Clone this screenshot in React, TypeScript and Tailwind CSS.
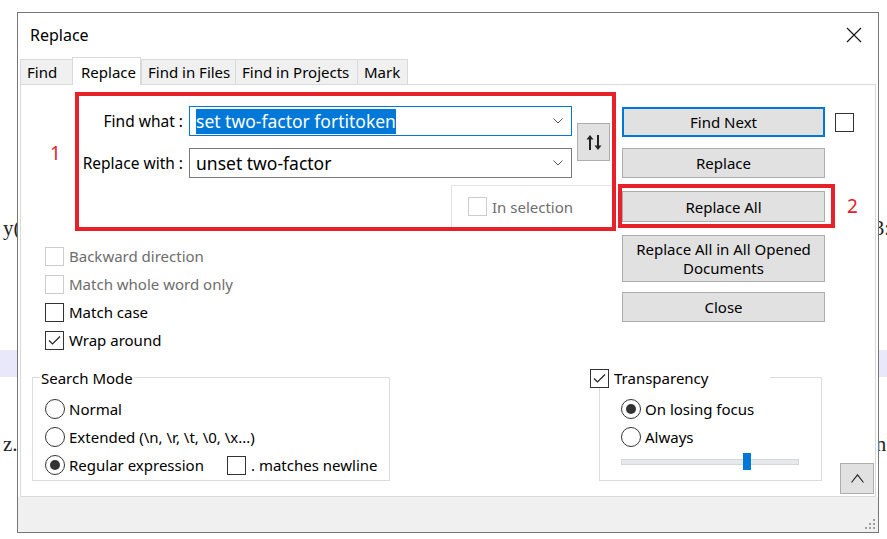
import React from 'react';

type CheckProps = { checked?: boolean; disabled?: boolean };

function CheckBox({ checked, disabled }: CheckProps) {
  return (
    <span
      className={`flex h-[19px] w-[19px] shrink-0 items-center justify-center border bg-white ${
        disabled ? 'border-[#cccccc]' : 'border-[#333333]'
      }`}
    >
      {checked && (
        <svg width="15" height="15" viewBox="0 0 15 15" fill="none">
          <path d="M2 7.5 L5.5 11 L13 3.5" stroke="#222" strokeWidth="1.2" />
        </svg>
      )}
    </span>
  );
}

function Radio({ selected }: { selected?: boolean }) {
  return (
    <span className="flex h-[20px] w-[20px] shrink-0 items-center justify-center rounded-full border border-[#333333] bg-white">
      {selected && <span className="h-[10px] w-[10px] rounded-full bg-[#333333]" />}
    </span>
  );
}

function CheckRow({ label, checked, disabled }: CheckProps & { label: string }) {
  return (
    <div className="flex h-[28px] items-center gap-[5px]">
      <CheckBox checked={checked} disabled={disabled} />
      <span className={disabled ? 'text-[#6d6d6d]' : 'text-black'}>{label}</span>
    </div>
  );
}

function RadioRow({ label, selected }: { label: string; selected?: boolean }) {
  return (
    <div className="flex h-[28px] items-center gap-[4px]">
      <Radio selected={selected} />
      <span>{label}</span>
    </div>
  );
}

function Combo({ value, focused }: { value: string; focused?: boolean }) {
  return (
    <div
      className={`flex h-[30px] w-[383px] items-center border bg-white pl-[6px] pr-[8px] ${
        focused ? 'border-[#0078d7]' : 'border-[#7a7a7a]'
      }`}
    >
      <span className="flex-1 text-[17.5px] leading-[25px]">
        {focused ? <span className="inline-block bg-[#0078d7] text-white">{value}</span> : value}
      </span>
      <svg width="10" height="6" viewBox="0 0 10 6" fill="none">
        <path d="M0.5 0.5 L5 5 L9.5 0.5" stroke="#555" strokeWidth="1" />
      </svg>
    </div>
  );
}

function WinButton({ children, className = '' }: { children: React.ReactNode; className?: string }) {
  return (
    <div
      className={`flex w-[203px] items-center justify-center bg-[#e1e1e1] text-center ${className}`}
    >
      {children}
    </div>
  );
}

const tabs = [
  { label: 'Find', width: 'w-[52px]' },
  { label: 'Replace', width: 'w-[69px]', active: true },
  { label: 'Find in Files', width: 'w-[94px]' },
  { label: 'Find in Projects', width: 'w-[122px]' },
  { label: 'Mark', width: 'w-[51px]', last: true },
];

const editorLines = [
  { left: 'y(', right: '3:' },
  { left: '', right: '' },
  { left: '', right: '' },
  { left: '', right: '' },
  { left: '', right: '' },
  { left: '', right: '', current: true },
  { left: '', right: '' },
  { left: '', right: '' },
  { left: 'z.', right: "n'" },
];

export default function App() {
  return (
    <div className="relative h-[539px] w-[887px] overflow-hidden bg-white font-['Noto_Sans',sans-serif] text-[15px] leading-[20px] text-black">
      {/* editor text behind the dialog */}
      <div className="flex flex-col pt-[215px] font-['Liberation_Serif',serif] text-[21px] leading-[27px] text-[#222]">
        {editorLines.map((line, i) => (
          <div
            key={i}
            className={`flex h-[27px] items-center justify-between pl-[3px] ${
              line.current ? 'bg-[#e8e8fa]' : ''
            }`}
          >
            <span>{line.left}</span>
            <span className="-mr-[3px]">{line.right}</span>
          </div>
        ))}
      </div>

      {/* Replace dialog */}
      <div className="absolute left-[17px] top-[12px] flex h-[521px] w-[862px] flex-col border border-[#767676] bg-white">
        <div className="flex h-[44px] shrink-0 items-center justify-between pl-[12px] pr-[16px]">
          <span className="text-[16px]">Replace</span>
          <svg width="16" height="16" viewBox="0 0 16 16" fill="none">
            <path d="M1 1 L15 15 M15 1 L1 15" stroke="#111" strokeWidth="1.1" />
          </svg>
        </div>

        <div className="mx-[2px] flex h-[27px] shrink-0 items-end">
          {tabs.map((t) =>
            t.active ? (
              <div
                key={t.label}
                className={`relative z-10 -mb-px flex h-[28px] items-center border-x border-t border-[#d9d9d9] bg-white pl-[8px] ${t.width}`}
              >
                {t.label}
              </div>
            ) : (
              <div
                key={t.label}
                className={`flex h-[25px] items-center border-l border-t border-[#d9d9d9] bg-[#f0f0f0] pl-[6px] ${t.width} ${
                  t.last ? 'border-r' : ''
                }`}
              >
                {t.label}
              </div>
            ),
          )}
        </div>

        <div className="mx-[2px] flex h-[413px] shrink-0 flex-col border border-[#d9d9d9] bg-white">
          <div className="flex h-[275px] shrink-0">
            <div className="w-[595px] shrink-0">
              <div className="flex pt-[7px]">
                <div className="mt-[50px] w-[54px] pl-[29px] text-[19px] leading-[22px] text-[#e8202a]">1</div>
                <div className="flex h-[139px] w-[541px] flex-col overflow-hidden border-4 border-[#e8202a]">
                  <div className="flex pt-[10px]">
                    <div className="flex flex-col">
                      <div className="flex items-center">
                        <span className="w-[104px] text-right text-[15.5px]">Find what :</span>
                        <div className="ml-[6px]">
                          <Combo value="set two-factor fortitoken" focused />
                        </div>
                      </div>
                      <div className="mt-[12px] flex items-center">
                        <span className="w-[104px] text-right text-[15.5px]">Replace with :</span>
                        <div className="ml-[6px]">
                          <Combo value="unset two-factor" />
                        </div>
                      </div>
                    </div>
                    <div className="ml-[5px] flex h-[38px] w-[33px] items-center justify-center self-center border border-[#adadad] bg-[#e1e1e1]">
                      <svg width="16" height="15" viewBox="0 0 16 15">
                        <path d="M4 0 L0.5 4.5 H3 V15 H5 V4.5 H7.5 Z" fill="#222" />
                        <path d="M12 15 L8.5 10.5 H11 V0 H13 V10.5 H15.5 Z" fill="#222" />
                      </svg>
                    </div>
                  </div>
                  <div className="ml-[372px] mt-[7px] flex flex-1 items-start gap-[5px] border-l border-t border-[#e3e3e3] pl-[16px] pt-[11px]">
                    <CheckBox disabled />
                    <span className="text-[#6d6d6d]">In selection</span>
                  </div>
                </div>
              </div>

              <div className="mt-[11px] pl-[24px]">
                <CheckRow label="Backward direction" disabled />
                <CheckRow label="Match whole word only" disabled />
                <CheckRow label="Match case" />
                <CheckRow label="Wrap around" checked />
              </div>
            </div>

            <div className="ml-[6px] flex flex-col">
              <div className="mt-[22px] flex items-center">
                <WinButton className="h-[30px] border-2 border-[#0078d7]">Find Next</WinButton>
                <div className="ml-[10px]">
                  <CheckBox />
                </div>
              </div>
              <WinButton className="mt-[11px] h-[30px] border border-[#adadad]">Replace</WinButton>
              <div className="mt-[6px] flex items-center">
                <div className="-ml-[4px] h-[44px] w-[217px] border-4 border-[#e8202a] pt-[3px]">
                  <WinButton className="h-[31px] border border-[#adadad]">Replace All</WinButton>
                </div>
                <span className="ml-[12px] text-[19px] leading-[22px] text-[#e8202a]">2</span>
              </div>
              <WinButton className="mt-[7px] h-[47px] border border-[#adadad] leading-[19px]">
                Replace All in All Opened
                <br />
                Documents
              </WinButton>
              <WinButton className="mt-[10px] h-[30px] border border-[#adadad]">Close</WinButton>
            </div>
          </div>

          <div className="flex flex-1 items-start">
            <div className="ml-[11px] mt-[17px] flex h-[104px] w-[358px] shrink-0 flex-col border border-[#dcdcdc]">
              <span className="-mt-[10px] ml-[7px] self-start bg-white px-[1px]">Search Mode</span>
              <div className="mt-[7px] pl-[12px]">
                <RadioRow label="Normal" />
                <RadioRow label="Extended (\n, \r, \t, \0, \x...)" />
                <div className="flex h-[28px] items-center">
                  <div className="w-[182px]">
                    <RadioRow label="Regular expression" selected />
                  </div>
                  <CheckBox />
                  <span className="ml-[5px]">. matches newline</span>
                </div>
              </div>
            </div>

            <div className="ml-[209px] mt-[17px] flex h-[104px] w-[223px] shrink-0 flex-col border border-[#dcdcdc]">
              <div className="-ml-[10px] -mt-[10px] flex h-[20px] w-[180px] items-center gap-[5px] bg-white">
                <CheckBox checked />
                <span>Transparency</span>
              </div>
              <div className="mt-[7px] pl-[21px]">
                <RadioRow label="On losing focus" selected />
                <RadioRow label="Always" />
                <div className="relative mt-[8px] h-[6px] w-[178px] border border-[#d6d6d6] bg-[#e7eaea]">
                  <div className="absolute left-[121px] top-[-7px] h-[17px] w-[8px] bg-[#0078d7]" />
                </div>
              </div>
            </div>

            <div className="ml-[18px] mt-[103px] flex h-[31px] w-[34px] items-center justify-center border border-[#adadad] bg-[#e1e1e1]">
              <svg width="13" height="9" viewBox="0 0 13 9" fill="none">
                <path d="M0.5 8.5 L6.5 0.8 L12.5 8.5" stroke="#222" strokeWidth="1.1" />
              </svg>
            </div>
          </div>
        </div>

        <div className="flex flex-1 items-end justify-end bg-[#f0f0f0] pb-[2px] pr-[2px]">
          <svg width="11" height="11" viewBox="0 0 11 11">
            <rect x="8" y="0" width="2" height="2" fill="#a0a0a0" />
            <rect x="4" y="4" width="2" height="2" fill="#a0a0a0" />
            <rect x="8" y="4" width="2" height="2" fill="#a0a0a0" />
            <rect x="0" y="8" width="2" height="2" fill="#a0a0a0" />
            <rect x="4" y="8" width="2" height="2" fill="#a0a0a0" />
            <rect x="8" y="8" width="2" height="2" fill="#a0a0a0" />
          </svg>
        </div>
      </div>
    </div>
  );
}
